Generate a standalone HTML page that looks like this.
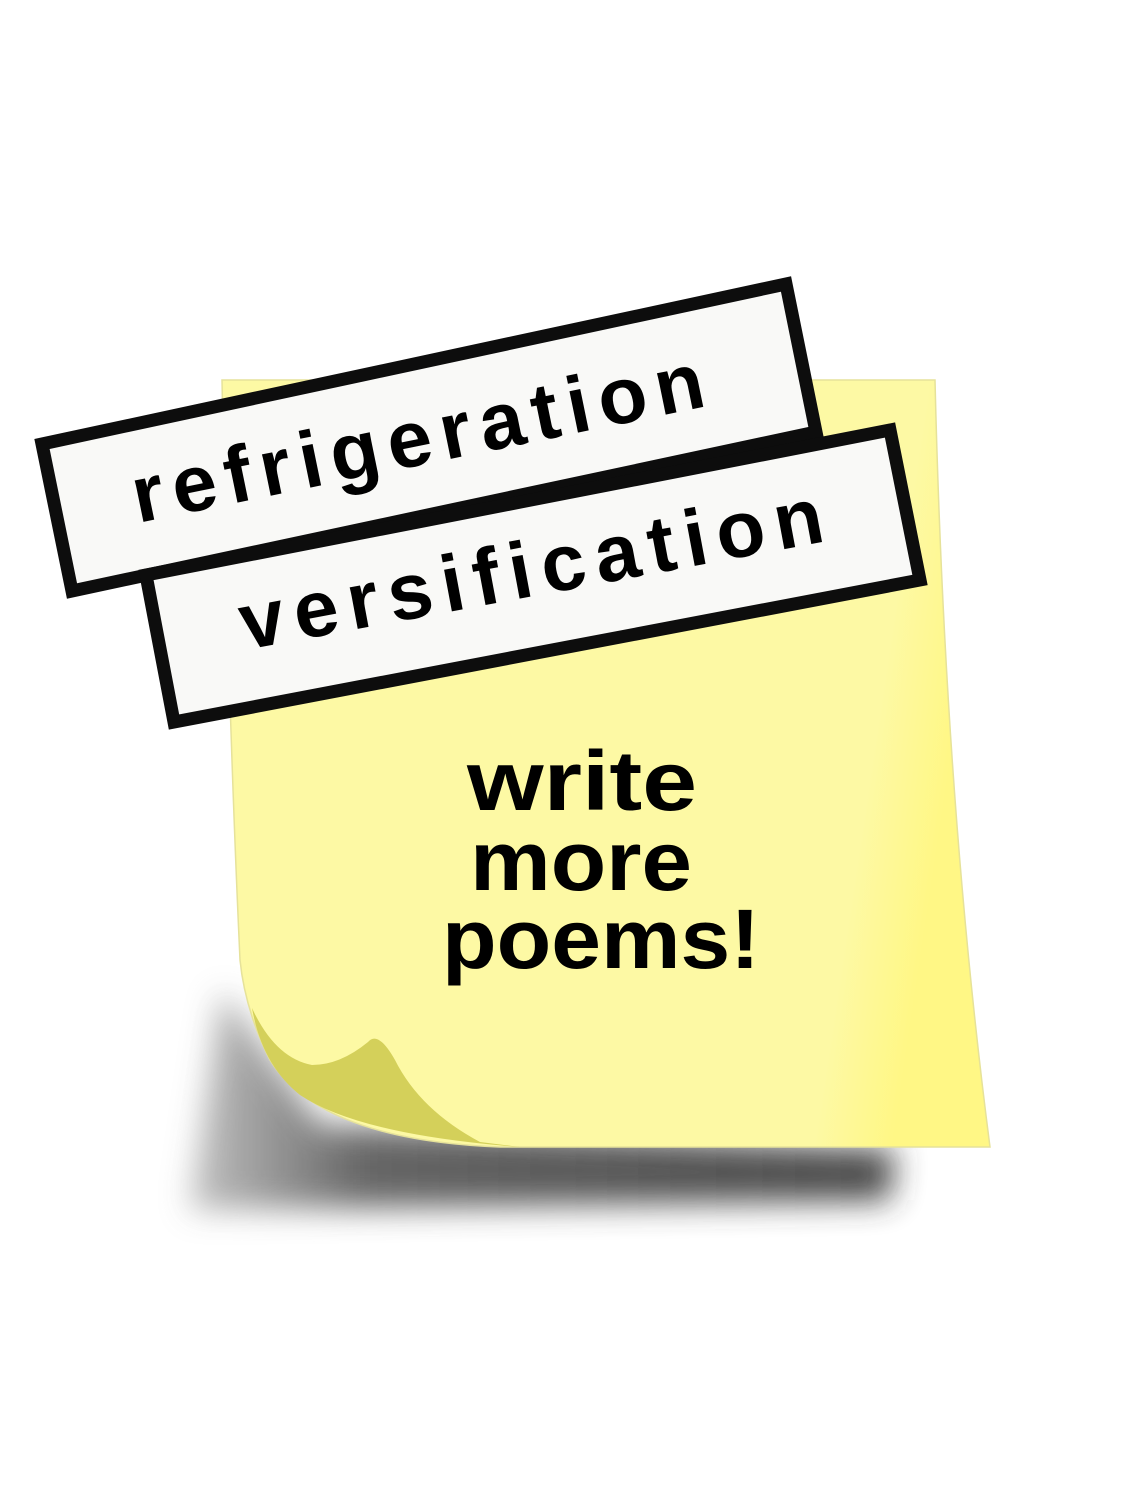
<!DOCTYPE html>
<html><head><meta charset="utf-8"><style>html,body{margin:0;padding:0;background:#fff;width:1125px;height:1500px;overflow:hidden}</style></head>
<body>
<svg width="1125" height="1500" viewBox="0 0 1125 1500" xmlns="http://www.w3.org/2000/svg">
<defs>
<filter id="b" x="-20%" y="-20%" width="140%" height="140%"><feGaussianBlur stdDeviation="16"/></filter>
<linearGradient id="sh" x1="0" y1="0" x2="1" y2="0"><stop offset="0" stop-color="#bbb"/><stop offset="0.25" stop-color="#555"/><stop offset="1" stop-color="#333"/></linearGradient>
<linearGradient id="g" x1="0" y1="0" x2="1" y2="0.15"><stop offset="0" stop-color="#fdf9a4"/><stop offset="0.9" stop-color="#fdf9a4"/><stop offset="1" stop-color="#fff785"/></linearGradient>
</defs>
<path d="M222 990 L190 1210 L890 1200 L895 1150 L320 1125 Z" fill="url(#sh)" filter="url(#b)" opacity="0.9"/>
<path d="M222 380 L935 380 Q945 800 990 1147 L500 1147 Q320 1140 270 1060 Q245 1010 240 960 Q228 700 222 380 Z" fill="url(#g)" stroke="#e6e29a" stroke-width="1.5"/>
<path d="M252 1008 Q262 1065 300 1095 Q360 1135 520 1147 L480 1142 Q420 1110 395 1060 Q378 1030 368 1042 Q340 1065 312 1065 Q275 1058 252 1008 Z" fill="#d4d05a"/>
<polygon points="42,444 786,284 816,432 72,591" fill="#f9f9f7" stroke="#0d0d0d" stroke-width="13"/>
<polygon points="146,575 890,430 920,580 174,722" fill="#f9f9f7" stroke="#0d0d0d" stroke-width="13"/>
<g font-family="Liberation Sans, sans-serif" font-weight="bold" fill="#000">
<text transform="translate(138,523) rotate(-11.6)" font-size="80" textLength="582" lengthAdjust="spacing">refrigeration</text>
<text transform="translate(245,650) rotate(-10.6)" font-size="80" textLength="592" lengthAdjust="spacing">versification</text>
<text x="467" y="810" font-size="84" textLength="230" lengthAdjust="spacingAndGlyphs">write</text>
<text x="470" y="890" font-size="84" textLength="222" lengthAdjust="spacingAndGlyphs">more</text>
<text x="442" y="968" font-size="84" textLength="318" lengthAdjust="spacingAndGlyphs">poems!</text>
</g>
</svg>
</body></html>
